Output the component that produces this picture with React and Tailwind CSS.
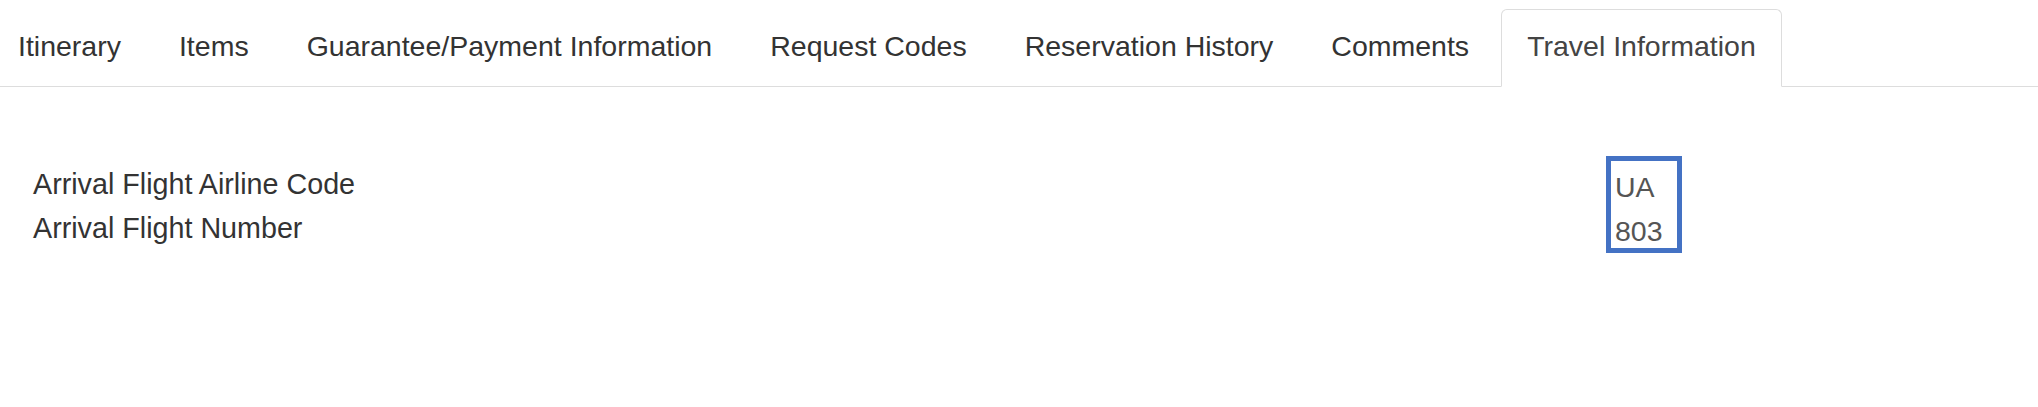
import React from "react";

const tabs = [
  "Itinerary",
  "Items",
  "Guarantee/Payment Information",
  "Request Codes",
  "Reservation History",
  "Comments",
  "Travel Information",
];

export default function App() {
  const active = "Travel Information";
  return (
    <div
      className="w-[2038px] h-[407px] bg-white overflow-hidden text-[#333]"
      style={{ fontFamily: '"Liberation Sans", Arial, sans-serif' }}
    >
      <ul className="flex mt-[9px] border-b border-[#ddd] -ml-[8px] text-[28.5px] leading-[40px]">
        {tabs.map((t) => (
          <li
            key={t}
            className={
              "mr-[6px] -mb-px pt-[16px] pb-[20px] px-[25px] border whitespace-nowrap rounded-t-[6px] " +
              (t === active
                ? "bg-white border-[#ddd] border-b-transparent text-[#444]"
                : "border-transparent text-[#333]")
            }
          >
            {t}
          </li>
        ))}
      </ul>
      <div className="grid grid-cols-[1573px_auto] pl-[33px] mt-[69px] text-[28.7px] leading-[44px] items-start">
        <div className="mt-[6px] text-[#333]">
          <div>Arrival Flight Airline Code</div>
          <div>Arrival Flight Number</div>
        </div>
        <div className="w-[76px] h-[97px] border-[5px] border-[#4472c4] pt-[4px] pl-[4px] text-[28.5px] text-[#555] overflow-visible">
          <div>UA</div>
          <div>803</div>
        </div>
      </div>
    </div>
  );
}
